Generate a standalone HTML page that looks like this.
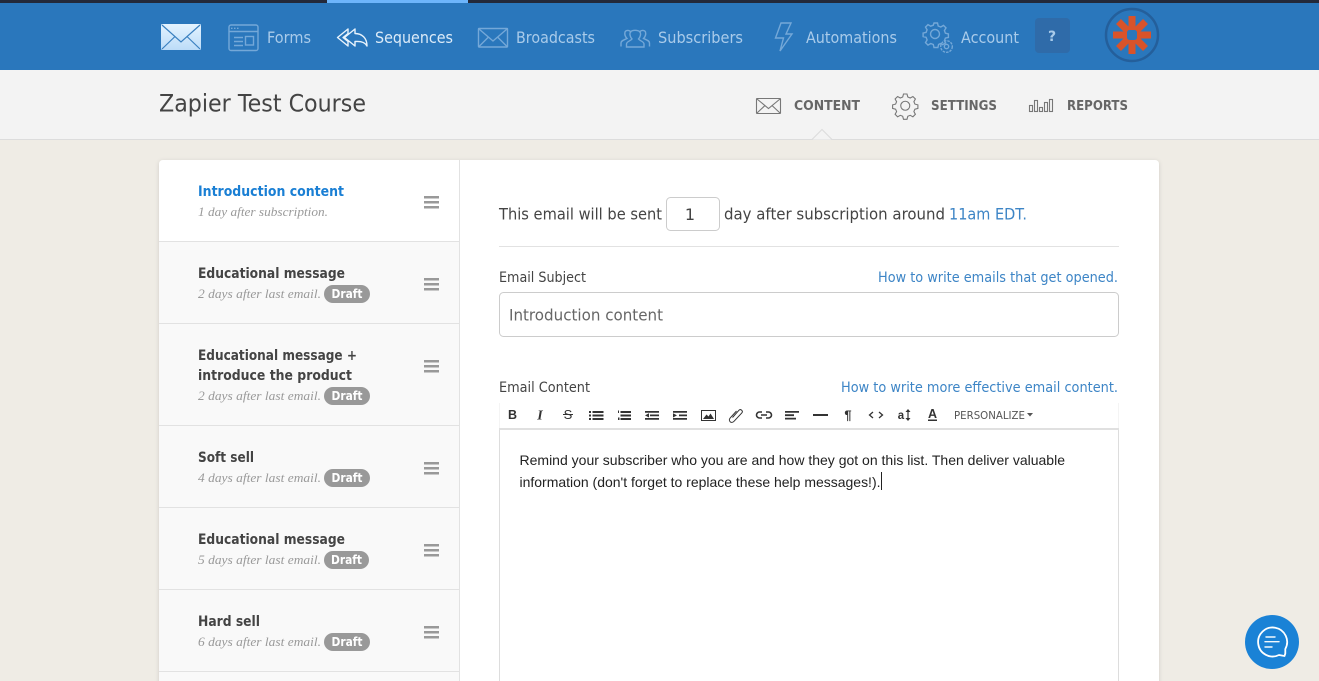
<!DOCTYPE html>
<html><head><meta charset="utf-8"><title>Zapier Test Course</title>
<style>
html,body{margin:0;padding:0;width:1319px;height:681px;overflow:hidden;background:#efece5}
svg{display:block}
text{font-family:"DejaVu Sans",sans-serif;white-space:pre}
.n{font-size:16px;fill:#a9cbea}
.t{font-weight:bold;font-size:14px;fill:#444}
.s{font-family:"Liberation Serif",serif;font-style:italic;font-size:12.5px;fill:#999}
.d{font-weight:bold;font-size:12px;fill:#fff}
.h{font-weight:bold;font-size:13.5px;fill:#666}
.b{font-size:16px;fill:#444}
.l{font-size:14px;fill:#444}
.a{font-size:14px;fill:#3d85c6}
.e{font-family:"Liberation Sans",sans-serif;font-size:14px;fill:#222}
.ni{fill:none;stroke:#74a8d8;stroke-width:1.4}
.gi{fill:none;stroke:#777;stroke-width:1.1}
.tb{fill:#333}
.ts{fill:none;stroke:#333}
.tf{font-family:"Liberation Sans",sans-serif;fill:#333}
</style></head>
<body>
<svg width="1319" height="681" viewBox="0 0 1319 681" xmlns="http://www.w3.org/2000/svg">
<defs>
<linearGradient id="env" x1="0" y1="0" x2="0" y2="1"><stop offset="0" stop-color="#e4f3ff"/><stop offset="1" stop-color="#bcdcf8"/></linearGradient>
<filter id="sh" x="-2%" y="-2%" width="104%" height="104%"><feDropShadow dx="0" dy="1" stdDeviation="2" flood-color="#000" flood-opacity=".14"/></filter>
</defs>

<!-- top nav -->
<rect width="1319" height="70" fill="#2a77bc"/>
<rect width="1319" height="3" fill="#23293a"/>
<rect x="327" width="141" height="3" fill="#6db5fb"/>

<rect x="161" y="24" width="40" height="26" rx="1.5" fill="url(#env)"/>
<path d="M162 25L181 42L200 25M162 49L175 36.5M200 49L187 36.5" fill="none" stroke="#3a80c0" stroke-width="1.2"/>

<g class="ni">
<rect x="229" y="25" width="29" height="25.5" rx="2"/>
<path d="M229 31.5H258M234 37.5H243M234 41.5H243M234 45.5H243"/>
<rect x="245.500" y="36.500" width="8" height="8.500"/>
</g>
<path d="M231 28.300h1.500M234 28.300h1.500M237 28.300h1.500" stroke="#74a8d8" stroke-width="1.400" fill="none"/>
<text class="n" x="267" y="43" textLength="44" lengthAdjust="spacingAndGlyphs">Forms</text>

<path d="M348 29L337.500 37.500L348 46V41.500L343 37.500L348 33.500ZM355 29L344.500 37.500L355 46V41.500C361 41 365 42 367 46C367 38 362 33.500 355 33.500Z" fill="none" stroke="#e8f3fc" stroke-width="1.400" stroke-linejoin="round"/>
<text class="n" x="375" y="43" textLength="78" lengthAdjust="spacingAndGlyphs" style="fill:#dcebf8">Sequences</text>

<g class="ni">
<rect x="478.500" y="28.500" width="29" height="18.500" rx=".5"/>
<path d="M479 29L493 41L507 29M479 46.500L488.500 37M507 46.500L497.500 37"/>
</g>
<text class="n" x="516" y="43" textLength="79" lengthAdjust="spacingAndGlyphs">Broadcasts</text>

<g class="ni">
<path d="M621 46.500V43C621 40.500 624 40 627 38.500C625 36.500 624.500 34 625 32C626 29.800 630 29.800 631 32.500"/>
<path d="M649.500 46.500V43C649.500 40.500 646.500 40 643.500 38.500C645.500 36.500 646 34 645.500 32C644.500 29.800 640.500 29.800 639.500 32.500"/>
<path d="M626.500 47V44C626.500 41.500 630.500 41 632 39C629.800 36.500 629.500 33.500 630.500 32C632 29.800 638 29.800 640 32C641 33.500 640.700 36.500 638.500 39C640 41 644 41.500 644 44V47Z"/>
</g>
<text class="n" x="658" y="43" textLength="85" lengthAdjust="spacingAndGlyphs">Subscribers</text>

<path class="ni" d="M781 23H791L786 34H792L780 51L783.500 38H775.500Z" stroke-linejoin="miter"/>
<text class="n" x="806" y="43" textLength="91" lengthAdjust="spacingAndGlyphs">Automations</text>

<g class="ni">
<path d="M934 23h3.500l.7 3 2.600 1 2.700-1.600 2.500 2.500-1.600 2.700 1 2.600 3 .7v3.500l-3 .7-1 2.600 1.200 2.200-3 1.800-2.200-1.200-1.800 1-.7 3h-3.900l-.7-3-2.600-1-2.700 1.600-2.500-2.500 1.600-2.700-1-2.600-3-.7v-3.500l3-.7 1-2.600-1.600-2.700 2.500-2.500 2.700 1.600 2.600-1z"/>
<circle cx="935" cy="34" r="4.500"/>
<circle cx="946.500" cy="46.500" r="5.800" stroke-dasharray="2.500 1"/>
<circle cx="946.500" cy="46.500" r="2.200"/>
</g>
<text class="n" x="961" y="43" textLength="58" lengthAdjust="spacingAndGlyphs">Account</text>

<rect x="1035" y="18" width="35" height="35" rx="4" fill="#2f6ba9"/>
<text x="1052" y="41" text-anchor="middle" style="font-weight:bold;font-size:14px;fill:#a9cbea">?</text>

<circle cx="1132" cy="35" r="26" fill="#2a77bc" stroke="#245f9b" stroke-width="2.500"/>
<g stroke="#d9532a" stroke-width="7">
<path d="M1132 16V54M1113 35H1151M1118.500 21.500L1145.500 48.500M1145.500 21.500L1118.500 48.500"/>
</g>
<rect x="1127" y="30" width="10" height="10" rx="2.500" fill="#2a77bc"/>

<!-- sub header -->
<rect y="70" width="1319" height="69" fill="#f3f3f3"/>
<rect y="139" width="1319" height="1" fill="#dcdcdc"/>
<path d="M812 139.500L822 129.500L832 139.500" fill="#f3f3f3" stroke="#dcdcdc"/>
<text x="159" y="111.500" textLength="207" lengthAdjust="spacingAndGlyphs" style="font-size:24px;fill:#444">Zapier Test Course</text>

<g class="gi">
<rect x="756.500" y="98.500" width="24" height="15" rx=".5"/>
<path d="M757 99L768.500 108.500L780 99M757 113L765 105.500M780 113L772 105.500"/>
</g>
<text class="h" x="794" y="110" textLength="66" lengthAdjust="spacingAndGlyphs">CONTENT</text>

<g class="gi">
<path d="M903.500 94h3.500l.8 3 2.400 1 2.700-1.500 2.500 2.500-1.500 2.700 1 2.400 3 .8v3.500l-3 .8-1 2.400 1.500 2.700-2.500 2.500-2.700-1.500-2.400 1-.8 3h-3.500l-.8-3-2.400-1-2.700 1.500-2.500-2.500 1.500-2.700-1-2.400-3-.8v-3.500l3-.8 1-2.400-1.500-2.700 2.500-2.500 2.700 1.500 2.400-1z"/>
<circle cx="905.250" cy="105.750" r="4.500"/>
</g>
<text class="h" x="931" y="110" textLength="66" lengthAdjust="spacingAndGlyphs">SETTINGS</text>

<g class="gi">
<rect x="1029.500" y="105.500" width="3" height="6"/>
<rect x="1034.500" y="100.500" width="3" height="11"/>
<rect x="1039.500" y="107.500" width="3" height="4"/>
<rect x="1044.500" y="102.500" width="3" height="9"/>
<rect x="1049.500" y="99.500" width="3" height="12"/>
</g>
<text class="h" x="1067" y="110" textLength="61" lengthAdjust="spacingAndGlyphs">REPORTS</text>

<!-- card -->
<path d="M159 164a4 4 0 0 1 4-4H1155a4 4 0 0 1 4 4V700H159Z" fill="#fff" filter="url(#sh)"/>
<rect x="159" y="242" width="300" height="440" fill="#f9f9f9"/>
<rect x="459" y="160" width="1" height="521" fill="#e2e2e2"/>
<g fill="#e2e2e2">
<rect x="159" y="241" width="300" height="1"/>
<rect x="159" y="323" width="300" height="1"/>
<rect x="159" y="425" width="300" height="1"/>
<rect x="159" y="507" width="300" height="1"/>
<rect x="159" y="589" width="300" height="1"/>
<rect x="159" y="671" width="300" height="1"/>
</g>

<text class="t" x="198" y="196" textLength="146" lengthAdjust="spacingAndGlyphs" style="fill:#1a7fd4">Introduction content</text>
<text class="s" x="198" y="216" textLength="130" lengthAdjust="spacingAndGlyphs">1 day after subscription.</text>

<text class="t" x="198" y="278" textLength="147" lengthAdjust="spacingAndGlyphs">Educational message</text>
<text class="s" x="198" y="298" textLength="123" lengthAdjust="spacingAndGlyphs">2 days after last email.</text>
<rect x="324" y="285" width="46" height="18" rx="9" fill="#999"/>
<text class="d" x="347" y="298" text-anchor="middle" textLength="31" lengthAdjust="spacingAndGlyphs">Draft</text>

<text class="t" x="198" y="360" textLength="159" lengthAdjust="spacingAndGlyphs">Educational message +</text>
<text class="t" x="198" y="380" textLength="154" lengthAdjust="spacingAndGlyphs">introduce the product</text>
<text class="s" x="198" y="400" textLength="123" lengthAdjust="spacingAndGlyphs">2 days after last email.</text>
<rect x="324" y="387" width="46" height="18" rx="9" fill="#999"/>
<text class="d" x="347" y="400" text-anchor="middle" textLength="31" lengthAdjust="spacingAndGlyphs">Draft</text>

<text class="t" x="198" y="462" textLength="56" lengthAdjust="spacingAndGlyphs">Soft sell</text>
<text class="s" x="198" y="482" textLength="123" lengthAdjust="spacingAndGlyphs">4 days after last email.</text>
<rect x="324" y="469" width="46" height="18" rx="9" fill="#999"/>
<text class="d" x="347" y="482" text-anchor="middle" textLength="31" lengthAdjust="spacingAndGlyphs">Draft</text>

<text class="t" x="198" y="544" textLength="147" lengthAdjust="spacingAndGlyphs">Educational message</text>
<text class="s" x="198" y="564" textLength="123" lengthAdjust="spacingAndGlyphs">5 days after last email.</text>
<rect x="324" y="551" width="45" height="18" rx="9" fill="#999"/>
<text class="d" x="346.500" y="564" text-anchor="middle" textLength="31" lengthAdjust="spacingAndGlyphs">Draft</text>

<text class="t" x="198" y="626" textLength="62" lengthAdjust="spacingAndGlyphs">Hard sell</text>
<text class="s" x="198" y="646" textLength="123" lengthAdjust="spacingAndGlyphs">6 days after last email.</text>
<rect x="324" y="633" width="46" height="18" rx="9" fill="#999"/>
<text class="d" x="347" y="646" text-anchor="middle" textLength="31" lengthAdjust="spacingAndGlyphs">Draft</text>

<g fill="#999">
<path d="M424 196h15v2.500h-15zM424 201h15v2.500h-15zM424 206h15v2.500h-15z"/>
<path d="M424 278h15v2.500h-15zM424 283h15v2.500h-15zM424 288h15v2.500h-15z"/>
<path d="M424 360h15v2.500h-15zM424 365h15v2.500h-15zM424 370h15v2.500h-15z"/>
<path d="M424 462h15v2.500h-15zM424 467h15v2.500h-15zM424 472h15v2.500h-15z"/>
<path d="M424 544h15v2.500h-15zM424 549h15v2.500h-15zM424 554h15v2.500h-15z"/>
<path d="M424 626h15v2.500h-15zM424 631h15v2.500h-15zM424 636h15v2.500h-15z"/>
</g>

<!-- form -->
<text class="b" x="499" y="219.500" textLength="163" lengthAdjust="spacingAndGlyphs">This email will be sent</text>
<rect x="666.500" y="197.500" width="53" height="33" rx="4" fill="#fff" stroke="#ccc"/>
<text class="b" x="690" y="220" text-anchor="middle">1</text>
<text class="b" x="724" y="219.500" textLength="221" lengthAdjust="spacingAndGlyphs">day after subscription around</text>
<text class="b" x="949" y="219.500" textLength="78" lengthAdjust="spacingAndGlyphs" style="fill:#3d85c6">11am EDT.</text>
<rect x="499" y="246" width="620" height="1" fill="#e2e2e2"/>

<text class="l" x="499" y="282" textLength="87" lengthAdjust="spacingAndGlyphs">Email Subject</text>
<text class="a" x="878" y="282" textLength="240" lengthAdjust="spacingAndGlyphs">How to write emails that get opened.</text>
<rect x="499.500" y="292.500" width="619" height="44" rx="4" fill="#fff" stroke="#ccc"/>
<text class="b" x="509" y="320.500" textLength="154" lengthAdjust="spacingAndGlyphs" style="fill:#666">Introduction content</text>

<text class="l" x="499" y="392" textLength="91" lengthAdjust="spacingAndGlyphs">Email Content</text>
<text class="a" x="841" y="392" textLength="277" lengthAdjust="spacingAndGlyphs">How to write more effective email content.</text>

<!-- editor -->
<rect x="499" y="429" width="1" height="252" fill="#ddd"/>
<rect x="1118" y="429" width="1" height="252" fill="#ddd"/>
<rect x="1118" y="403" width="1" height="26" fill="#f4f4f4"/>
<rect x="499" y="403" width="1" height="26" fill="#f4f4f4"/>
<rect x="499" y="428" width="620" height="2" fill="#e0e0e0"/>

<g>
<text class="tf" x="512.500" y="419" text-anchor="middle" style="font-weight:bold;font-size:12.500px">B</text>
<text x="540" y="419.500" text-anchor="middle" style="font-family:'Liberation Serif',serif;font-style:italic;font-weight:bold;font-size:14px;fill:#333">I</text>
<text class="tf" x="568" y="419" text-anchor="middle" style="font-size:13px">S</text>
<rect x="563" y="414" width="10" height="1" class="tb"/>
<path class="tb" d="M589 411h2v2h-2zM589 414.500h2v2h-2zM589 418h2v2h-2zM592.500 411h11v2h-11zM592.500 414.500h11v2h-11zM592.500 418h11v2h-11z"/>
<path class="tb" d="M618 410.500h1v2.500h-1zM618 417.500h1.500v2.500h-1.500zM620.500 411h10.500v2h-10.500zM620.500 414.500h10.500v2h-10.500zM620.500 418h10.500v2h-10.500z"/>
<path class="tb" d="M645 411h14v1.800h-14zM650 414.500h9v1.800h-9zM645 418h14v1.800h-14zM649 413.300v4.200l-4-2.100z"/>
<path class="tb" d="M673 411h14v1.800h-14zM679 414.500h8v1.800h-8zM673 418h14v1.800h-14zM673 413.300v4.200l4-2.100z"/>
<rect x="701.500" y="410.500" width="14" height="10" fill="#fff" stroke="#333"/>
<path class="tb" d="M703 419l3.500-4.500 2 2 2-3 3.500 5.500z"/>
<path class="ts" stroke-width="1" d="M732.500 417.500l6.500-7.300c1.700-1.700 4.500.8 2.800 2.700l-7.800 8.400c-2.800 2.800-6.200-.6-3.800-3.400l6.300-6.900"/>
<path class="ts" stroke-width="1.600" d="M762 412h-2.500a3 3 0 0 0 0 6H762M766 412h2.500a3 3 0 0 1 0 6H766M761 415h6"/>
<path class="tb" d="M785 411h14v1.800h-14zM785 414.300h9v1.800h-9zM785 417.700h11v1.800h-11z"/>
<rect x="813" y="414" width="15" height="2" class="tb"/>
<text class="tf" x="848" y="419.500" text-anchor="middle" style="font-weight:bold;font-size:13px">¶</text>
<path class="ts" stroke-width="1.300" d="M873 412l-3.500 3 3.500 3M879 412l3.500 3-3.500 3"/>
<text class="tf" x="901" y="419" text-anchor="middle" style="font-weight:bold;font-size:11.500px">a</text>
<path class="ts" stroke-width="1.200" d="M908 411v8"/>
<path class="tb" d="M908 409l2.500 3h-5zM908 421l2.500-3h-5z"/>
<text class="tf" x="932.500" y="418" text-anchor="middle" style="font-weight:bold;font-size:12.500px">A</text>
<rect x="928" y="419.500" width="9" height="1.500" class="tb"/>
<text x="954" y="419" textLength="71" lengthAdjust="spacingAndGlyphs" style="font-size:10.500px;fill:#555">PERSONALIZE</text>
<path fill="#555" d="M1027 413h6l-3 3.500z"/>
</g>

<text class="e" x="519.500" y="465" textLength="545.500" lengthAdjust="spacingAndGlyphs">Remind your subscriber who you are and how they got on this list. Then deliver valuable</text>
<text class="e" x="519.500" y="487" textLength="361" lengthAdjust="spacingAndGlyphs">information (don't forget to replace these help messages!).</text>
<rect x="881" y="472" width="1" height="18" fill="#222"/>

<!-- chat -->
<circle cx="1272" cy="642" r="27" fill="#1a82d6"/>
<path d="M1285.300 653.500L1284.500 656L1279 655A14.500 14.500 0 1 1 1285.300 649Z" fill="none" stroke="#fff" stroke-width="1.800" stroke-linejoin="round"/>
<path d="M1266 637h9M1265 641.700h14M1265 647h7" stroke="#fff" stroke-width="1.400" fill="none" stroke-linecap="round" opacity=".95"/>
</svg>
</body></html>
